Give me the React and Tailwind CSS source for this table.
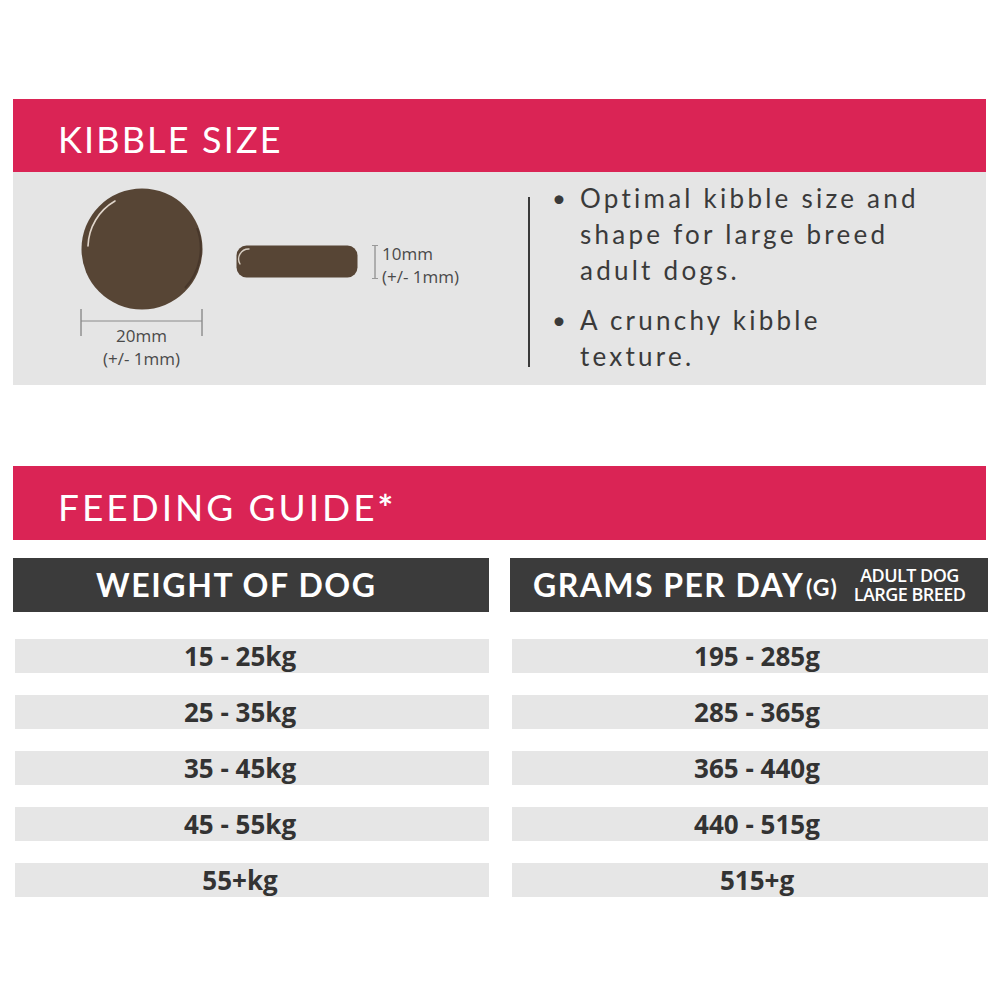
import React from "react";

const head = { fontFamily: "Lato, 'Noto Sans', sans-serif" };
const num = { fontFamily: "'Open Sans', 'Noto Sans', sans-serif" };

function Circle() {
  return (
    <svg width="122" height="122" viewBox="0 0 122 122">
      <circle cx="61" cy="61" r="60.5" fill="#574535" />
      <path d="M7 58 A54 54 0 0 1 34 13" fill="none" stroke="#efe6dc" strokeWidth="1.6" strokeLinecap="round" opacity="0.9" />
      <path d="M116 40 A58 58 0 0 1 104 100" fill="none" stroke="#3d2f24" strokeWidth="2" opacity="0.6" />
    </svg>
  );
}

function Pill() {
  return (
    <svg width="122" height="33" viewBox="0 0 122 33">
      <rect x="0.5" y="0.5" width="121" height="32" rx="10" fill="#574535" />
      <path d="M4 19 A10 10 0 0 1 13 4" fill="none" stroke="#efe6dc" strokeWidth="1.4" strokeLinecap="round" opacity="0.85" />
    </svg>
  );
}

const weights = ["15 - 25kg", "25 - 35kg", "35 - 45kg", "45 - 55kg", "55+kg"];
const grams = ["195 - 285g", "285 - 365g", "365 - 440g", "440 - 515g", "515+g"];

export default function App() {
  return (
    <div className="w-[1000px] h-[1000px] bg-white pt-[99px]">
      <div className="ml-[13px] w-[975px]">
        {/* KIBBLE SIZE */}
        <div className="w-[973px] h-[73px] bg-[#da2455] flex items-center pl-[45px] pt-[6px]">
          <span style={head} className="text-white text-[36px] leading-none tracking-[0.06em]">KIBBLE SIZE</span>
        </div>
        <div className="w-[973px] h-[213px] bg-[#e5e5e5] flex">
          <div className="w-[515px] flex pl-[67px] pt-[16px]">
            <div className="w-[123px] flex flex-col items-center">
              <Circle />
              <svg width="124" height="28" viewBox="0 0 124 28" className="-mt-[1px]">
                <line x1="1" y1="0" x2="1" y2="27" stroke="#666" strokeWidth="1" />
                <line x1="122" y1="0" x2="122" y2="27" stroke="#666" strokeWidth="1" />
                <line x1="1" y1="12" x2="122" y2="12" stroke="#8a8a8a" strokeWidth="1" />
              </svg>
              <div style={num} className="-mt-[13px] text-[17px] leading-[23px] text-[#4a4a4a] text-center whitespace-nowrap">
                <div>20mm</div>
                <div>(+/- 1mm)</div>
              </div>
            </div>
            <div className="ml-[33px] mt-[57px] flex items-start">
              <Pill />
              <svg width="8" height="34" viewBox="0 0 8 34" className="ml-[13px]">
                <line x1="4" y1="0.5" x2="4" y2="33.5" stroke="#777" strokeWidth="1" />
                <line x1="1" y1="0.5" x2="7" y2="0.5" stroke="#999" strokeWidth="1" />
                <line x1="1" y1="33.5" x2="7" y2="33.5" stroke="#999" strokeWidth="1" />
              </svg>
              <div style={num} className="ml-[3px] -mt-[3px] text-[17px] leading-[23px] text-[#4a4a4a] whitespace-nowrap">
                <div>10mm</div>
                <div>(+/- 1mm)</div>
              </div>
            </div>
          </div>
          <div className="w-[2px] h-[170px] mt-[25px] bg-[#3a3a3a]" />
          <div style={head} className="pt-[8px] pl-[22px] text-[26px] leading-[36px] text-[#3a3a3a] tracking-[0.125em]">
            <div className="flex">
              <span className="w-[28px] shrink-0 text-[24px]">•</span>
              <span className="w-[355px]">Optimal kibble size and shape for large breed adult dogs.</span>
            </div>
            <div className="flex mt-[14px]">
              <span className="w-[28px] shrink-0 text-[24px]">•</span>
              <span className="w-[260px]">A crunchy kibble texture.</span>
            </div>
          </div>
        </div>

        {/* FEEDING GUIDE */}
        <div className="mt-[81px] w-[973px] h-[74px] bg-[#da2455] flex items-center pl-[45px] pt-[6px]">
          <span style={head} className="text-white text-[37px] leading-none tracking-[0.08em]">FEEDING GUIDE<span className="font-bold">*</span></span>
        </div>

        <div className="mt-[18px] grid grid-cols-[476px_478px] gap-x-[21px]">
          <div className="h-[54px] bg-[#3b3b3b] flex items-center pl-[83px]">
            <span style={head} className="text-white text-[32px] font-bold leading-none tracking-[0.05em]">WEIGHT OF DOG</span>
          </div>
          <div className="h-[54px] bg-[#3b3b3b] flex items-center pl-[23px]">
            <span style={head} className="text-white text-[32px] font-bold leading-none tracking-[0.045em]">GRAMS PER DAY</span>
            <span style={head} className="text-white text-[23px] font-bold leading-none tracking-[0.04em] ml-[2px] mt-[4px]">(G)</span>
            <div style={num} className="ml-[16px] text-white text-[18px] font-semibold leading-[19px] tracking-[-0.03em] text-center flex flex-col">
              <span>ADULT DOG</span>
              <span>LARGE BREED</span>
            </div>
          </div>
          <div className="mt-[27px] flex flex-col gap-[22px]">
            {weights.map((w) => (
              <div key={w} className="h-[34px] ml-[2px] bg-[#e6e6e6] flex items-center justify-center pr-[24px]">
                <span style={num} className="text-[26px] font-bold text-[#333] leading-none">{w}</span>
              </div>
            ))}
          </div>
          <div className="mt-[27px] flex flex-col gap-[22px]">
            {grams.map((g) => (
              <div key={g} className="h-[34px] ml-[2px] bg-[#e6e6e6] flex items-center justify-center pl-[14px]">
                <span style={num} className="text-[26px] font-bold text-[#333] leading-none">{g}</span>
              </div>
            ))}
          </div>
        </div>
      </div>
    </div>
  );
}
